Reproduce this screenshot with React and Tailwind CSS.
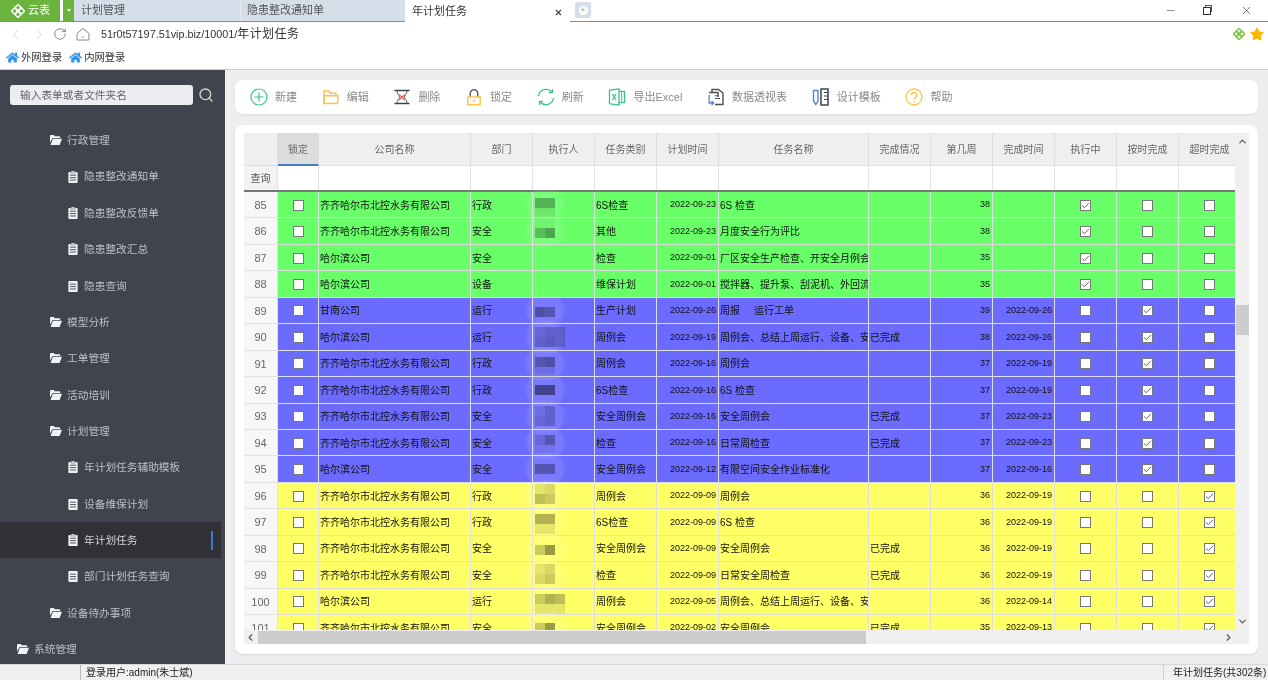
import { ChevronUp, ChevronDown, ChevronLeft, ChevronRight, RotateCw, Search, X, Minus } from "lucide-react";
import { FaHome, FaStar } from "react-icons/fa";

const font = "font-['Liberation_Sans','Noto_Sans_CJK_SC',sans-serif]";
const cols = "grid grid-cols-[34px_41px_152px_62px_62px_62px_62px_150px_62px_62px_62px_62px_62px_62px] w-[997px]";

const QQ = "齐齐哈尔市北控水务有限公司";
const HRB = "哈尔滨公司";
const WEEKLY = "周例会、总结上周运行、设备、安";

const green = "bg-[#68ff68]";
const blue = "bg-[#6b6bff]";
const yellow = "bg-[#ffff66]";

// 执行人 is blurred out in the picture: each row keeps its own mosaic
const rows = [
  { no: 85, bg: green, co: QQ, dept: "行政", type: "6S检查", plan: "2022-09-23", name: "6S 检查", week: 38, state: 0, top: "top-[6px]", mosaic: [["bg-black/30", "bg-black/30"], ["bg-black/10", "bg-black/10"]] },
  { no: 86, bg: green, co: QQ, dept: "安全", type: "其他", plan: "2022-09-23", name: "月度安全行为评比", week: 38, state: 0, top: "top-[0px]", mosaic: [["bg-black/5", "bg-black/5"], ["bg-black/25", "bg-black/35"]] },
  { no: 87, bg: green, co: HRB, dept: "安全", type: "检查", plan: "2022-09-01", name: "厂区安全生产检查、开安全月例会", week: 35, state: 0 },
  { no: 88, bg: green, co: HRB, dept: "设备", type: "维保计划", plan: "2022-09-01", name: "搅拌器、提升泵、刮泥机、外回流", week: 35, state: 0 },
  { no: 89, bg: blue, co: "甘南公司", dept: "运行", type: "生产计划", plan: "2022-09-26", name: "周报     运行工单", week: 39, done: "2022-09-26", state: 1, top: "top-[9px]", mosaic: [["bg-black/35", "bg-black/30"]] },
  { no: 90, bg: blue, co: HRB, dept: "运行", type: "周例会", plan: "2022-09-19", name: WEEKLY, result: "已完成", week: 38, done: "2022-09-26", state: 1, top: "top-[3px]", mosaic: [["bg-black/15", "bg-black/20", "bg-black/20"], ["bg-black/20", "bg-black/25", "bg-black/20"]] },
  { no: 91, bg: blue, co: QQ, dept: "行政", type: "周例会", plan: "2022-09-16", name: "周例会", week: 37, done: "2022-09-19", state: 1, top: "top-[6px]", mosaic: [["bg-black/30", "bg-black/35"], ["bg-black/10", "bg-black/10"]] },
  { no: 92, bg: blue, co: QQ, dept: "行政", type: "6S检查", plan: "2022-09-16", name: "6S 检查", week: 37, done: "2022-09-19", state: 1, top: "top-[8px]", mosaic: [["bg-black/45", "bg-black/45"]] },
  { no: 93, bg: blue, co: QQ, dept: "安全", type: "安全周例会", plan: "2022-09-16", name: "安全周例会", result: "已完成", week: 37, done: "2022-09-23", state: 1, top: "top-[2px]", mosaic: [["bg-black/10", "bg-black/20"], ["bg-black/15", "bg-black/20"]] },
  { no: 94, bg: blue, co: QQ, dept: "安全", type: "检查", plan: "2022-09-16", name: "日常周检查", result: "已完成", week: 37, done: "2022-09-23", state: 1, top: "top-[5px]", mosaic: [["bg-black/15", "bg-black/30"], ["bg-black/5", "bg-black/5"]] },
  { no: 95, bg: blue, co: HRB, dept: "安全", type: "安全周例会", plan: "2022-09-12", name: "有限空间安全作业标准化", week: 37, done: "2022-09-16", state: 1, top: "top-[8px]", mosaic: [["bg-black/30", "bg-black/30"]] },
  { no: 96, bg: yellow, co: QQ, dept: "行政", type: "周例会", plan: "2022-09-09", name: "周例会", week: 36, done: "2022-09-19", state: 2, top: "top-[1px]", mosaic: [["bg-black/10", "bg-black/15"], ["bg-black/25", "bg-black/20"]] },
  { no: 97, bg: yellow, co: QQ, dept: "行政", type: "6S检查", plan: "2022-09-09", name: "6S 检查", week: 36, done: "2022-09-19", state: 2, top: "top-[5px]", mosaic: [["bg-black/30", "bg-black/30"], ["bg-black/10", "bg-black/10"]] },
  { no: 98, bg: yellow, co: QQ, dept: "安全", type: "安全周例会", plan: "2022-09-09", name: "安全周例会", result: "已完成", week: 36, done: "2022-09-19", state: 2, top: "top-[9px]", mosaic: [["bg-black/20", "bg-black/40"]] },
  { no: 99, bg: yellow, co: QQ, dept: "安全", type: "检查", plan: "2022-09-09", name: "日常安全周检查", result: "已完成", week: 36, done: "2022-09-19", state: 2, top: "top-[2px]", mosaic: [["bg-black/10", "bg-black/15"], ["bg-black/15", "bg-black/20"]] },
  { no: 100, bg: yellow, co: HRB, dept: "运行", type: "周例会", plan: "2022-09-05", name: WEEKLY, week: 36, done: "2022-09-14", state: 2, top: "top-[5px]", mosaic: [["bg-black/20", "bg-black/30", "bg-black/25"], ["bg-black/10", "bg-black/10", "bg-black/10"]] },
  { no: 101, bg: yellow, co: QQ, dept: "安全", type: "安全周例会", plan: "2022-09-02", name: "安全周例会", result: "已完成", week: 35, done: "2022-09-13", state: 2, top: "top-[8px]", mosaic: [["bg-black/20", "bg-black/40"]] },
];

const headers = ["", "锁定", "公司名称", "部门", "执行人", "任务类别", "计划时间", "任务名称", "完成情况", "第几周", "完成时间", "执行中", "按时完成", "超时完成"];

const menu = [
  [2, "行政管理"],
  [3, "隐患整改通知单"],
  [3, "隐患整改反馈单"],
  [3, "隐患整改汇总"],
  [4, "隐患查询"],
  [2, "模型分析"],
  [2, "工单管理"],
  [2, "活动培训"],
  [2, "计划管理"],
  [3, "年计划任务辅助模板"],
  [4, "设备维保计划"],
  [3, "年计划任务", true],
  [4, "部门计划任务查询"],
  [2, "设备待办事项"],
  [1, "系统管理"],
];

const Logo = ({ className, dot = "#fff", fill = "#fff" }) => (
  <svg viewBox="0 0 16 16" className={className}>
    <rect x="2.6" y="2.6" width="10.8" height="10.8" rx="1.5" transform="rotate(45 8 8)" fill={fill} />
    <circle cx="8" cy="4.6" r="1.7" fill={dot} />
    <circle cx="8" cy="11.4" r="1.7" fill={dot} />
    <circle cx="4.6" cy="8" r="1.7" fill={dot} />
    <circle cx="11.4" cy="8" r="1.7" fill={dot} />
  </svg>
);

const FolderOpenIcon = () => (
  <svg viewBox="0 0 12 10" className="w-3 h-2.5 shrink-0" fill="#f2f3f5">
    <path d="M0 1.2C0 .5.5 0 1.2 0h2.6l1 1.2h4.4c.6 0 1 .4 1 1V3H2.6L0 7.4z" />
    <path d="M2.9 3.8H12L9.6 10H.6z" />
  </svg>
);

const DocIcon = ({ clip }) => (
  <svg viewBox="0 0 10 12" className="w-2.5 h-3 shrink-0">
    <rect x="0.4" y="1" width="9.2" height="11" rx="0.8" fill="#f2f3f5" />
    {clip && <rect x="3" y="0" width="4" height="2" fill="#f2f3f5" stroke="#41434f" strokeWidth="0.5" />}
    <path d="M2 4.2h6M2 6.6h6M2 9h6" stroke="#41434f" strokeWidth="0.9" />
  </svg>
);

const PlusIcon = () => (
  <svg viewBox="0 0 18 18" className="w-[18px] h-[18px]" fill="none" stroke="#3dbf8e" strokeWidth="1.2">
    <circle cx="9" cy="9" r="8" />
    <path d="M9 4.5v9M4.5 9h9" />
  </svg>
);

const FolderIcon = () => (
  <svg viewBox="0 0 18 18" className="w-[18px] h-[18px]" fill="none" stroke="#fdc33f" strokeWidth="1.4">
    <path d="M2 15.5V3h5l1.6 2.2H14v2.6" />
    <path d="M2 15.5h13.6l.4-7.7H2z" />
  </svg>
);

const DeleteIcon = () => (
  <svg viewBox="0 0 18 18" className="w-[18px] h-[18px]" fill="none">
    <path d="M1.5 2.5h15M1.5 15.5h15" stroke="#3d4450" strokeWidth="1.6" />
    <path d="M4 3c0 3 2.5 4.5 2.5 6S4 12 4 15M14 3c0 3-2.5 4.5-2.5 6s2.5 3 2.5 6" stroke="#3d4450" strokeWidth="0.8" />
    <path d="M6 6.5l6 5.5M12 6.5l-6 5.5" stroke="#ee5a52" strokeWidth="1.3" />
  </svg>
);

const LockIcon = () => (
  <svg viewBox="0 0 18 18" className="w-[18px] h-[18px]" fill="none">
    <path d="M5.2 9V5.5a3.8 3.8 0 0 1 7.6 0V9" stroke="#4a505c" strokeWidth="1.3" />
    <rect x="2.8" y="9" width="12.4" height="7.6" stroke="#fdc33f" strokeWidth="1.4" />
    <rect x="8" y="11.6" width="2" height="2" fill="#fdc33f" />
  </svg>
);

const RefreshIcon = () => (
  <svg viewBox="0 0 18 18" className="w-[18px] h-[18px]" fill="none" stroke="#3dbf8e" strokeWidth="1.3">
    <path d="M1.5 8A7.6 7.6 0 0 1 14.8 4" />
    <path d="M16.5 10A7.6 7.6 0 0 1 3.2 14" />
    <path d="M15.4 1v3.6h-3.6M2.6 17v-3.6h3.6" />
  </svg>
);

const ExcelIcon = () => (
  <svg viewBox="0 0 18 18" className="w-[18px] h-[18px]" fill="none" stroke="#3dbf8e" strokeWidth="1.3">
    <path d="M1.5 2.2L11 1v16l-9.5-1.2z" />
    <path d="M11 3.4h5.5v11.2H11" />
    <path d="M4.4 6l3.6 6M8 6l-3.6 6" />
    <path d="M13.7 3.4v11.2" strokeWidth="1" />
  </svg>
);

const PivotIcon = () => (
  <svg viewBox="0 0 18 18" className="w-[18px] h-[18px]" fill="none">
    <path d="M5 4V1.5h6.5L16 5v11.5H8" stroke="#4a505c" strokeWidth="1.4" />
    <path d="M2 4.5h9V9" stroke="#4a505c" strokeWidth="1.4" />
    <path d="M8 7.8h4M8 10.5h5" stroke="#4a505c" strokeWidth="1" />
    <path d="M2.2 7v8h4M4.6 13l2 2-2 2" stroke="#4f86d6" strokeWidth="1.3" />
  </svg>
);

const DesignIcon = () => (
  <svg viewBox="0 0 18 18" className="w-[18px] h-[18px]" fill="none">
    <path d="M1.5 2.5h4.5v10.5L3.8 16.5 1.5 13z" stroke="#4f86d6" strokeWidth="1.4" />
    <rect x="9" y="1" width="7" height="16" stroke="#3d4450" strokeWidth="1.5" />
    <path d="M12 4.5h4M12 8h4M12 11.5h4" stroke="#3d4450" strokeWidth="1.1" />
  </svg>
);

const HelpIcon = () => (
  <svg viewBox="0 0 18 18" className="w-[18px] h-[18px]" fill="none" stroke="#fdc33f" strokeWidth="1.3">
    <circle cx="9" cy="9" r="8" />
    <path d="M6.3 7a2.7 2.7 0 1 1 4.2 2.2c-1 .6-1.5 1.1-1.5 2.3" />
    <path d="M9 12.8v1.4" />
  </svg>
);

const tools = [
  { icon: <PlusIcon />, label: "新建" },
  { icon: <FolderIcon />, label: "编辑" },
  { icon: <DeleteIcon />, label: "删除" },
  { icon: <LockIcon />, label: "锁定" },
  { icon: <RefreshIcon />, label: "刷新" },
  { icon: <ExcelIcon />, label: "导出Excel" },
  { icon: <PivotIcon />, label: "数据透视表" },
  { icon: <DesignIcon />, label: "设计模板" },
  { icon: <HelpIcon />, label: "帮助" },
];

const Box = ({ checked }) => (
  <span className="w-[11px] h-[11px] bg-white border border-[#777] flex items-center justify-center">
    {checked && (
      <svg viewBox="0 0 9 9" className="w-[9px] h-[9px]" fill="none" stroke="#666" strokeWidth="1">
        <path d="M1 4.5l2.4 2.2L8 1.8" />
      </svg>
    )}
  </span>
);

const cell = "border-r border-b border-[#dedede] pt-[1px] overflow-hidden whitespace-nowrap flex items-center";

const Row = ({ row }) => (
  <div className={`${cols} h-[26.44px] ${row.bg} text-[10px] text-[#111]`}>
    <div className="border-r border-b border-[#e2e2e2] pt-[1px] bg-[#f7f7f7] text-[#666] flex items-center justify-center text-[11px]">{row.no}</div>
    <div className={`${cell} justify-center`}><Box /></div>
    <div className={`${cell} pl-[1px]`}>{row.co}</div>
    <div className={`${cell} pl-[1px]`}>{row.dept}</div>
    <div className={`${cell} !overflow-visible relative`}>
      {row.mosaic && (
        <>
          <div className="absolute -left-[7px] -top-[3px] -bottom-[3px] w-[38px] rounded-[14px] bg-white/10 blur-[1px]" />
          <div className={`absolute left-[2px] ${row.top} flex flex-col blur-[0.4px]`}>
            {row.mosaic.map((line, i) => (
              <div key={i} className="flex">
                {line.map((c, j) => <div key={j} className={`w-[10px] h-[10px] ${c}`} />)}
              </div>
            ))}
          </div>
        </>
      )}
    </div>
    <div className={`${cell} pl-[1px]`}>{row.type}</div>
    <div className={`${cell} justify-end pr-[2px] text-[9px]`}>{row.plan}</div>
    <div className={`${cell} pl-[1px] whitespace-pre`}>{row.name}</div>
    <div className={`${cell} pl-[1px]`}>{row.result}</div>
    <div className={`${cell} justify-end pr-[2px] text-[9px]`}>{row.week}</div>
    <div className={`${cell} justify-end pr-[2px] text-[9px]`}>{row.done}</div>
    <div className={`${cell} justify-center`}><Box checked={row.state === 0} /></div>
    <div className={`${cell} justify-center`}><Box checked={row.state === 1} /></div>
    <div className={`${cell} justify-center`}><Box checked={row.state === 2} /></div>
  </div>
);

const Sidebar = () => (
  <aside className="w-[225px] shrink-0 bg-[#41434f] overflow-hidden">
    <div className="flex items-center pl-[10px] pb-[2px] h-[52px]">
      <div className="w-[183px] h-[20px] bg-[#ecedf0] rounded-[3px] pl-[10px] text-[10.7px] text-[#666] flex items-center">输入表单或者文件夹名</div>
      <Search size={16} strokeWidth={2} className="ml-[5px] text-[#d8d8d8]" />
    </div>
    <ul className="w-[221px]">
      {menu.map(([level, label, active]) => (
        <li
          key={label}
          className={`relative h-[36.35px] flex items-center text-[10.7px] ${active ? "bg-[#303136] text-[#d2d4da]" : "text-[#bcc0cc]"}`}
        >
          {level === 1 && <div className="flex items-center gap-[5px] pl-[17px]"><FolderOpenIcon />{label}</div>}
          {level === 2 && <div className="flex items-center gap-[5px] pl-[50px]"><FolderOpenIcon />{label}</div>}
          {level >= 3 && <div className="flex items-center gap-[6px] pl-[68px]"><DocIcon clip={level === 3} />{label}</div>}
          {active && <span className="absolute left-[211px] top-[9px] w-[2px] h-[19px] bg-[#3f78c8]" />}
        </li>
      ))}
    </ul>
  </aside>
);

export default function App() {
  return (
    <div className={`w-[1268px] h-[680px] flex flex-col overflow-hidden bg-white ${font} blur-[0.3px]`}>
      {/* tab strip */}
      <div className="h-[22px] flex items-stretch border-b border-[#8a8a8a] text-[11px]">
        <div className="w-[60px] bg-[#6cb33e] text-white flex items-center gap-[2px] pl-[10px]">
          <Logo className="w-[16px] h-[16px]" dot="#6cb33e" />
          云表
        </div>
        <div className="w-[3px] bg-white" />
        <div className="w-[11px] bg-[#6cb33e] flex items-center justify-center">
          <span className="border-x-[2px] border-t-[3px] border-x-transparent border-t-white" />
        </div>
        <div className="w-[166px] bg-[#d4dfea] text-[#555] flex items-center pl-[7px]">计划管理</div>
        <div className="w-[165px] bg-[#d4dfea] border-l border-[#e4eaf1] text-[#555] flex items-center pl-[6px]">隐患整改通知单</div>
        <div className="w-[165px] bg-white text-[#333] flex items-center pl-[7px] -mb-[1px] relative">
          年计划任务
          <X size={9} strokeWidth={3} className="absolute right-[7px] top-[8px] text-[#444]" />
        </div>
        <div className="ml-[5px] mt-[2px] w-[16px] h-[16px] rounded-[2px] bg-[#d4dfea] flex items-center justify-center">
          <span className="w-[9px] h-[9px] rounded-full bg-white text-[#8a96a4] text-[9px] leading-[9px] text-center">+</span>
        </div>
        <div className="flex-1 flex items-center justify-end text-[#333]">
          <Minus size={11} strokeWidth={1.2} className="mr-[27px]" />
          <span className="relative w-[8px] h-[8px] border border-[#333] mr-[29px] bg-white before:absolute before:content-[''] before:-top-[3px] before:left-[1px] before:w-[7px] before:h-[7px] before:border before:border-[#555] before:-z-10" />
          <X size={13} strokeWidth={1.2} className="mr-[15px]" />
        </div>
      </div>

      {/* address bar */}
      <div className="h-[24px] flex items-center text-[#333]">
        <ChevronLeft size={15} strokeWidth={1} className="ml-[8px] text-[#bbb]" />
        <ChevronRight size={15} strokeWidth={1} className="ml-[9px] text-[#bbb]" />
        <RotateCw size={14} strokeWidth={1.2} className="ml-[6px] text-[#555]" />
        <svg viewBox="0 0 14 14" className="ml-[9px] w-[14px] h-[14px]" fill="none" stroke="#888" strokeWidth="1">
          <path d="M1 6.5L7 1.5l6 5V13H1z" />
          <path d="M6 10h2" />
        </svg>
        <span className="ml-[11px] text-[10.8px]">51r0t57197.51vip.biz/10001/</span>
        <span className="text-[12px] tracking-[0.4px]">年计划任务</span>
        <div className="ml-auto mr-[4px] flex items-center gap-[4px]">
          <Logo className="w-[14px] h-[14px]" fill="#7cc043" dot="#dff0c8" />
          <FaStar size={14} className="text-[#ffb400]" />
        </div>
      </div>

      {/* bookmarks */}
      <div className="h-[24px] flex items-center gap-[7px] pl-[6px] border-b border-[#cfcfcf] text-[10.3px] text-[#333]">
        <span className="flex items-center gap-[2px]"><FaHome size={13} className="text-[#2f93e6]" />外网登录</span>
        <span className="flex items-center gap-[2px]"><FaHome size={13} className="text-[#2f93e6]" />内网登录</span>
      </div>

      <div className="flex-1 flex min-h-0">
        <Sidebar />

        <main className="flex-1 min-w-0 bg-[#eeeeee] p-[10px] flex flex-col gap-[11px]">
          <div className="h-[34px] bg-white rounded-[8px] shadow-[0_1px_2px_rgba(0,0,0,0.08)] flex items-center gap-[24.7px] pl-[15px] text-[11px] text-[#888]">
            {tools.map((t) => (
              <div key={t.label} className="flex items-center gap-[7px]">
                {t.icon}
                {t.label}
              </div>
            ))}
          </div>

          <div className="flex-1 min-h-0 bg-white rounded-[8px] shadow-[0_1px_2px_rgba(0,0,0,0.1)] pt-[8px] pl-[9px] pr-[9px] pb-[10px] flex flex-col">
            <div className="flex-1 min-h-0 flex">
              <div className="flex-1 min-w-0 overflow-hidden">
                <div className={`${cols} h-[33px] bg-[#efefef] text-[10px] text-[#666]`}>
                  {headers.map((h, i) => (
                    <div
                      key={i}
                      className={`border-r border-b border-[#dedede] pt-[1px] flex items-center justify-center whitespace-nowrap ${i === 1 ? "bg-[#dcdcdc] !border-b-2 !border-b-[#4a7fc8]" : ""}`}
                    >
                      {h}
                    </div>
                  ))}
                </div>
                <div className={`${cols} h-[26px] bg-white text-[10px] text-[#555] border-b-2 border-[#777]`}>
                  {headers.map((h, i) => (
                    <div key={i} className={`border-r border-[#e2e2e2] flex items-center justify-center ${i === 0 ? "bg-[#f2f2f2]" : ""}`}>
                      {i === 0 && "查询"}
                    </div>
                  ))}
                </div>
                {rows.map((r) => <Row key={r.no} row={r} />)}
              </div>
              {/* vertical scrollbar */}
              <div className="w-[14px] shrink-0 bg-[#f0f0f0] flex flex-col items-center justify-between py-[3px] relative text-[#555]">
                <ChevronUp size={11} strokeWidth={2.5} />
                <div className="absolute top-[172px] left-[1px] w-[13px] h-[30px] bg-[#cdcdcd]" />
                <ChevronDown size={11} strokeWidth={2.5} />
              </div>
            </div>
            {/* horizontal scrollbar */}
            <div className="h-[14px] shrink-0 bg-[#f0f0f0] flex items-center text-[#555]">
              <ChevronLeft size={11} strokeWidth={2.5} className="ml-[1px]" />
              <div className="ml-[2px] w-[608px] h-[13px] bg-[#cdcdcd]" />
              <ChevronRight size={11} strokeWidth={2.5} className="ml-auto mr-[15px]" />
            </div>
          </div>
        </main>
      </div>

      {/* status bar */}
      <div className="h-[16px] shrink-0 bg-[#f0f0f0] border-t border-[#d8d8d8] flex items-center text-[10px] text-[#222]">
        <div className="w-[81px] h-full border-r border-[#bbb]" />
        <span className="pl-[5px]">登录用户:admin(朱士斌)</span>
        <div className="ml-auto w-[105px] h-full border-l border-[#d0d0d0] pl-[9px] flex items-center whitespace-nowrap">年计划任务(共302条)</div>
      </div>
    </div>
  );
}
